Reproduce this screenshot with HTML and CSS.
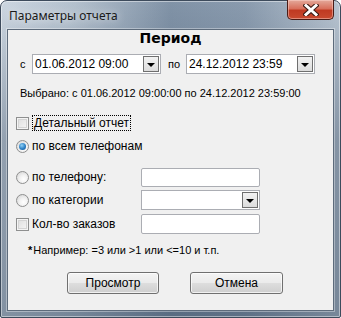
FILE: index.html
```html
<!DOCTYPE html>
<html>
<head>
  <meta charset="UTF-8">
  <title>Параметры отчета</title>
  <link rel="stylesheet" href="styles.css">
</head>
<body>
  <div class="window">
    <div class="titlebar">
      <span class="title">Параметры отчета</span>
      <div class="close-btn">
        <svg width="16" height="12" viewBox="0 0 16 12">
          <path d="M3 1.5 L13 10.5 M13 1.5 L3 10.5" stroke="#3a1a14" stroke-width="5" stroke-linecap="square"/>
          <path d="M3 1.5 L13 10.5 M13 1.5 L3 10.5" stroke="#fff" stroke-width="3" stroke-linecap="square"/>
        </svg>
      </div>
    </div>

    <div class="client">
      <div class="heading">Период</div>

      <div class="row period-row">
        <span class="lbl-from">с</span>
        <div class="combo w-date">
          <span class="combo-text">01.06.2012 09:00</span>
          <span class="drop"><i></i></span>
        </div>
        <span class="lbl-to">по</span>
        <div class="combo w-date">
          <span class="combo-text">24.12.2012 23:59</span>
          <span class="drop"><i></i></span>
        </div>
      </div>

      <div class="row selected">Выбрано: с 01.06.2012 09:00:00 по 24.12.2012 23:59:00</div>

      <div class="row check-row detail">
        <span class="checkbox"></span>
        <span class="focus">Детальный отчет</span>
      </div>

      <div class="row radio-row all">
        <span class="radio on"></span>
        <span>по всем телефонам</span>
      </div>

      <div class="row radio-row field-row r-phone">
        <span class="radio"></span>
        <span class="opt-label">по телефону:</span>
        <div class="textbox"></div>
      </div>

      <div class="row radio-row field-row r-cat">
        <span class="radio"></span>
        <span class="opt-label">по категории</span>
        <div class="combo w-field">
          <span class="combo-text"></span>
          <span class="drop"><i></i></span>
        </div>
      </div>

      <div class="row check-row field-row r-count">
        <span class="checkbox"></span>
        <span class="opt-label">Кол-во заказов</span>
        <div class="textbox"></div>
      </div>

      <div class="row note"><b>*</b> Например: =3 или &gt;1 или &lt;=10 и т.п.</div>

      <div class="row buttons">
        <button class="btn btn-view">Просмотр</button>
        <button class="btn btn-cancel">Отмена</button>
      </div>
    </div>
  </div>
</body>
</html>
```

FILE: styles.css
```css
body { margin: 0; background: #fff; font-family: "Liberation Sans", Arial, sans-serif; font-size: 11px; color: #000; }

.window {
  width: 341px; height: 318px; box-sizing: border-box;
  border: 1px solid #3d4b5c; border-radius: 7px 7px 2px 2px;
  background:
    linear-gradient(to bottom, rgba(255,255,255,0) 0px, rgba(40,60,85,0.35) 140px, rgba(40,60,85,0.45) 318px),
    linear-gradient(to right, #cdd7e1 0%, #b4c1ce 22%, #8193a7 50%, #8a9bae 72%, #b9c5d1 100%);
  box-shadow: inset 0 0 0 1px rgba(255,255,255,0.45);
  display: flex; flex-direction: column;
}

.titlebar { height: 28px; display: flex; align-items: flex-start; justify-content: space-between; }
.title { font-family: "Noto Sans", sans-serif; font-size: 12px; color: #1a1a1a; margin: 6px 0 0 8px; text-shadow: 0 0 8px rgba(255,255,255,0.9); }

.close-btn {
  width: 45px; height: 19px; margin-right: 6px; margin-top: -1px;
  border: 1px solid #4a1c16; border-top: none; border-radius: 0 0 5px 5px;
  background: linear-gradient(to bottom, #e4a99b 0%, #d8705c 45%, #c03a22 55%, #c84a30 100%);
  box-shadow: inset 0 0 0 1px rgba(255,220,210,0.45);
  display: flex; align-items: center; justify-content: center;
}

.client {
  margin: 0 6px 6px 6px; flex: 1;
  border: 1px solid #5d6b7b; background: #f0f0f0;
  box-shadow: 0 0 0 1px rgba(255,255,255,0.35);
  display: flex; flex-direction: column;
}

.heading { height: 17px; line-height: 17px; text-align: center; font-weight: bold; font-size: 14px; font-family: "DejaVu Sans", sans-serif; margin-top: 0; }

.row { display: flex; align-items: center; }

.period-row { margin-top: 7px; height: 20px; }
.lbl-from { width: 24px; box-sizing: border-box; padding-left: 12px; }
.lbl-to { width: 25px; box-sizing: border-box; padding-left: 7px; }

.combo {
  box-sizing: border-box; height: 20px; background: #fff;
  border: 1px solid #abadb3; display: flex; align-items: center; justify-content: space-between;
}
.w-date { width: 129px; }
.w-field { width: 119px; }
.combo-text { padding-left: 2px; font-size: 12px; }
.drop {
  width: 16px; height: 16px; box-sizing: border-box; margin-right: 1px;
  border: 1px solid #6f6f6f; background: linear-gradient(to bottom, #f2f2f2, #dcdcdc);
  display: flex; align-items: center; justify-content: center;
}
.drop i { width: 0; height: 0; border-left: 4px solid transparent; border-right: 4px solid transparent; border-top: 4px solid #000; margin-top: 1px; }

.selected { margin-top: 12px; height: 14px; padding-left: 12px; }

.checkbox, .radio { width: 13px; height: 13px; box-sizing: border-box; flex: none; }
.checkbox {
  border: 1px solid #8e8f8f; background: #fff;
  box-shadow: inset 0 0 0 1px #f4f4f4, inset 0 0 0 2px #d4d4d4;
  background: linear-gradient(135deg, #dcdcdc, #f8f8f8);
}
.radio {
  border-radius: 50%; border: 1px solid #8e8f8f;
  background: radial-gradient(circle at 60% 65%, #ffffff 0, #f2f2f2 40%, #cfcfcf 100%);
}
.radio.on { position: relative; }
.radio.on::after {
  content: ""; position: absolute; left: 2px; top: 2px; width: 7px; height: 7px; border-radius: 50%;
  background: radial-gradient(circle at 40% 35%, #8fd1f6 0, #2b7fc4 55%, #124b86 100%);
}

.check-row, .radio-row { padding-left: 8px; }
.detail { margin-top: 15px; height: 16px; }
.focus { margin-left: 3px; padding: 1px 1px; border: 1px dotted #000; line-height: 12px; font-size: 12px; }
.all { margin-top: 7px; height: 16px; }
.all span:last-child { margin-left: 3px; font-size: 12px; }

.field-row { height: 20px; }
.opt-label { width: 109px; margin-left: 3px; font-size: 12px; }
.r-phone { margin-top: 13px; }
.r-cat { margin-top: 3px; }
.r-count { margin-top: 4px; }
.textbox { width: 119px; height: 20px; box-sizing: border-box; background: #fff; border: 1px solid #abadb3; border-radius: 2px; }
.r-phone .textbox { height: 19px; }

.note { margin-top: 9px; height: 14px; padding-left: 20px; }
.note b { font-weight: bold; margin-right: 1px; }

.buttons { margin-top: 14px; height: 23px; padding-left: 59px; }
.btn {
  height: 22px; box-sizing: border-box; font-family: "Liberation Sans", Arial, sans-serif; font-size: 12px;
  border: 1px solid #707070; border-radius: 3px; padding: 0;
  background: linear-gradient(to bottom, #f4f4f4 0%, #ebebeb 48%, #dddddd 52%, #cfcfcf 100%);
  box-shadow: inset 0 0 0 1px rgba(255,255,255,0.7);
}
.btn-view { width: 92px; }
.btn-cancel { width: 93px; margin-left: 31px; }
```
